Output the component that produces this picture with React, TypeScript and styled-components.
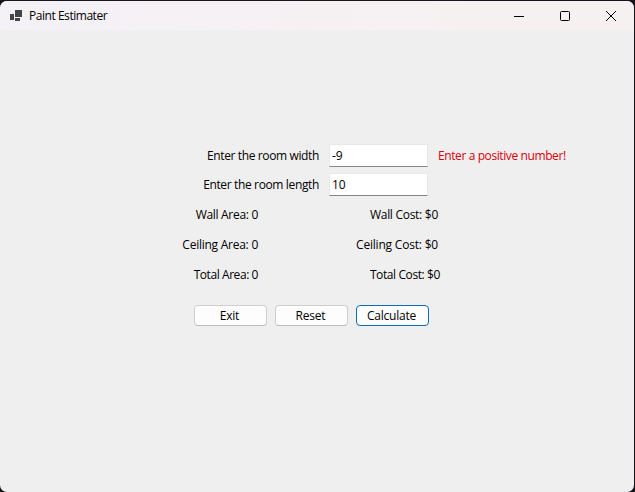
import React, { useState } from "react";
import styled, { createGlobalStyle } from "styled-components";

const GlobalStyle = createGlobalStyle`
  * { box-sizing: border-box; }
  body {
    margin: 0;
    background: #17131a;
    overflow: hidden;
    font-family: "Open Sans", "Noto Sans", sans-serif;
    font-size: 12px;
    color: #000;
  }
`;

const Window = styled.main`
  width: 634px;
  height: 491px;
  margin-top: 1px;
  border-radius: 7px;
  overflow: hidden;
  background: #efefef;
`;

const TitleBar = styled.header`
  display: flex;
  align-items: center;
  height: 29px;
  padding-left: 10px;
  background: linear-gradient(90deg, #f4f1f7, #f6f1f1 75%);
`;

const Title = styled.h1`
  flex: 1;
  margin: 0 0 0 7px;
  font-size: 12px;
  font-weight: 400;
  line-height: 16px;
  letter-spacing: -0.46px;
`;

const Controls = styled.div`
  display: flex;
`;

const ControlButton = styled.button`
  display: grid;
  place-items: center;
  width: 46px;
  height: 29px;
  padding: 0;
  border: 0;
  background: none;
`;

const Form = styled.form`
  padding-top: 114px;
`;

const FieldRow = styled.div`
  display: grid;
  grid-template-columns: 319px 99px auto;
  column-gap: 10px;
  align-items: center;
  height: 23px;
  margin-bottom: 6px;
`;

const Text = styled.span<{ $spacing?: number; $end?: number }>`
  justify-self: ${(p) => (p.$end !== undefined ? "end" : "start")};
  margin-right: ${(p) => p.$end ?? 0}px;
  line-height: 16px;
  white-space: nowrap;
  letter-spacing: ${(p) => p.$spacing ?? -0.4}px;
`;

const ErrorText = styled(Text)`
  color: #d8000c;
`;

const Input = styled.input`
  width: 99px;
  height: 23px;
  padding: 0 2px 1px;
  border: 1px solid #e8e8e8;
  border-bottom-color: #868686;
  outline: 0;
  background: #fff;
  color: #000;
  font: inherit;
  letter-spacing: -0.2px;
`;

const Results = styled.div`
  display: grid;
  grid-template-columns: 258px 182px;
  grid-auto-rows: 30px;
  align-items: center;
  margin-top: -2px;
`;

const Actions = styled.div`
  display: flex;
  gap: 8px;
  margin: 15px 0 0 194px;
`;

const Button = styled.button<{ $primary?: boolean }>`
  width: 73px;
  height: 21px;
  padding: 0 2px 0 0;
  border: 1px solid ${(p) => (p.$primary ? "#0f6cb8" : "#cecece")};
  border-bottom-color: ${(p) => (p.$primary ? "#0f6cb8" : "#bababa")};
  border-radius: 4px;
  background: #fdfdfd;
  color: #000;
  font: inherit;
  line-height: 16px;
  letter-spacing: -0.22px;
`;

const AppIcon = () => (
  <svg width="12" height="12" viewBox="0 0 12 12" fill="#444" shapeRendering="crispEdges">
    <path d="M0 4h4v6H0zM5 0h7v7H5zM5 8h5v3H5z" />
  </svg>
);

export default function App() {
  const [width, setWidth] = useState("-9");
  const [length, setLength] = useState("10");

  return (
    <>
      <GlobalStyle />
      <Window>
        <TitleBar>
          <AppIcon />
          <Title>Paint Estimater</Title>
          <Controls>
            <ControlButton aria-label="Minimize">
              <svg width="10" height="10" stroke="#000"><path d="M0 5.5h10" /></svg>
            </ControlButton>
            <ControlButton aria-label="Maximize">
              <svg width="10" height="10" fill="none" stroke="#000">
                <rect x=".5" y=".5" width="9" height="9" rx="1" />
              </svg>
            </ControlButton>
            <ControlButton aria-label="Close">
              <svg width="10" height="10" stroke="#000"><path d="M0 0l10 10M10 0L0 10" /></svg>
            </ControlButton>
          </Controls>
        </TitleBar>
        <Form onSubmit={(e) => e.preventDefault()}>
          <FieldRow>
            <Text as="label" htmlFor="room-width" $end={0} $spacing={-0.37}>Enter the room width</Text>
            <Input id="room-width" value={width} onChange={(e) => setWidth(e.target.value)} />
            <ErrorText>Enter a positive number!</ErrorText>
          </FieldRow>
          <FieldRow>
            <Text as="label" htmlFor="room-length" $end={0} $spacing={-0.36}>Enter the room length</Text>
            <Input id="room-length" value={length} onChange={(e) => setLength(e.target.value)} />
          </FieldRow>
          <Results>
            <Text $end={0} $spacing={-0.3}>Wall Area: 0</Text>
            <Text $end={2} $spacing={-0.28}>Wall Cost: $0</Text>
            <Text $end={0} $spacing={-0.25}>Ceiling Area: 0</Text>
            <Text $end={2} $spacing={-0.2}>Ceiling Cost: $0</Text>
            <Text $end={0} $spacing={-0.43}>Total Area: 0</Text>
            <Text $end={0}>Total Cost: $0</Text>
          </Results>
          <Actions>
            <Button type="button">Exit</Button>
            <Button type="button">Reset</Button>
            <Button type="submit" $primary>Calculate</Button>
          </Actions>
        </Form>
      </Window>
    </>
  );
}
